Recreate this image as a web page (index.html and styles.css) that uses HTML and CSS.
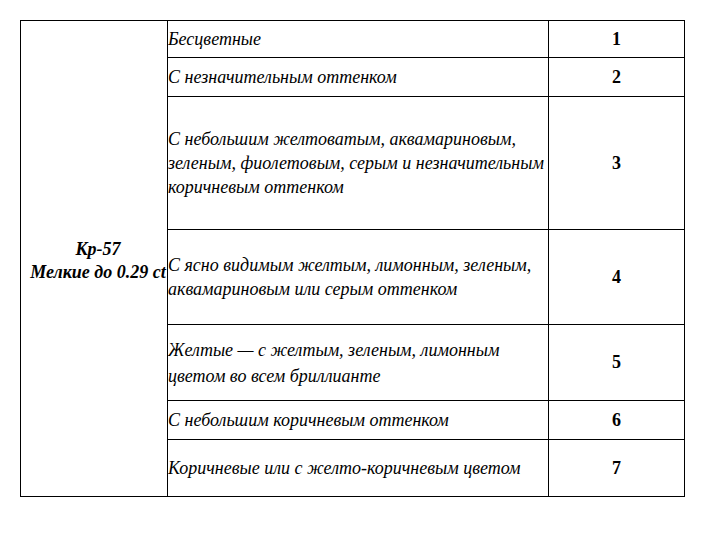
FILE: index.html
```html
<!DOCTYPE html>
<html lang="ru">
<head>
<meta charset="utf-8">
<link rel="stylesheet" href="styles.css">
</head>
<body>
<table class="grid">
  <colgroup>
    <col class="c-group">
    <col class="c-desc">
    <col class="c-num">
  </colgroup>
  <tbody>
    <tr class="r1">
      <td class="group" rowspan="7"><div class="group-text">Кр-57<br>Мелкие до 0.29 ct</div></td>
      <td class="desc">Бесцветные</td>
      <td class="num">1</td>
    </tr>
    <tr class="r2">
      <td class="desc">С незначительным оттенком</td>
      <td class="num">2</td>
    </tr>
    <tr class="r3">
      <td class="desc">С небольшим желтоватым, аквамариновым,<br>зеленым, фиолетовым, серым и незначительным<br>коричневым оттенком</td>
      <td class="num">3</td>
    </tr>
    <tr class="r4">
      <td class="desc">С ясно видимым желтым, лимонным, зеленым,<br>аквамариновым или серым оттенком</td>
      <td class="num">4</td>
    </tr>
    <tr class="r5">
      <td class="desc">Желтые — с желтым, зеленым, лимонным<br>цветом во всем бриллианте</td>
      <td class="num">5</td>
    </tr>
    <tr class="r6">
      <td class="desc">С небольшим коричневым оттенком</td>
      <td class="num">6</td>
    </tr>
    <tr class="r7">
      <td class="desc">Коричневые или с желто-коричневым цветом</td>
      <td class="num">7</td>
    </tr>
  </tbody>
</table>
</body>
</html>
```
FILE: styles.css
```css
html, body {
  margin: 0;
  padding: 0;
  background: #fff;
}
body {
  font-family: "Liberation Serif", "Times New Roman", serif;
  color: #000;
}
.grid {
  margin: 20px 0 0 20px;
  border-collapse: collapse;
  table-layout: fixed;
  width: 664px;
}
.c-group { width: 147px; }
.c-desc { width: 381px; }
.c-num { width: 136px; }
.grid td {
  border: 1px solid #000;
  padding: 0;
  vertical-align: middle;
}
.desc {
  font-style: italic;
  font-size: 18px;
  line-height: 24px;
  padding-left: 1px;
  padding-top: 5px;
  white-space: nowrap;
}
.num {
  text-align: center;
  font-weight: bold;
  font-size: 18px;
  padding-top: 5px;
}
.group {
  text-align: center;
}
.group-text {
  font-weight: bold;
  font-style: italic;
  font-size: 18px;
  line-height: 23px;
  white-space: nowrap;
  margin-top: 4px;
  margin-right: -8px;
}
.r1 { height: 37px; }
.r2 { height: 39px; }
.r3 { height: 133px; }
.r4 { height: 95px; }
.r5 { height: 76px; }
.r5 .desc { line-height: 26px; }
.r6 { height: 39px; }
.r7 { height: 57px; }
```
